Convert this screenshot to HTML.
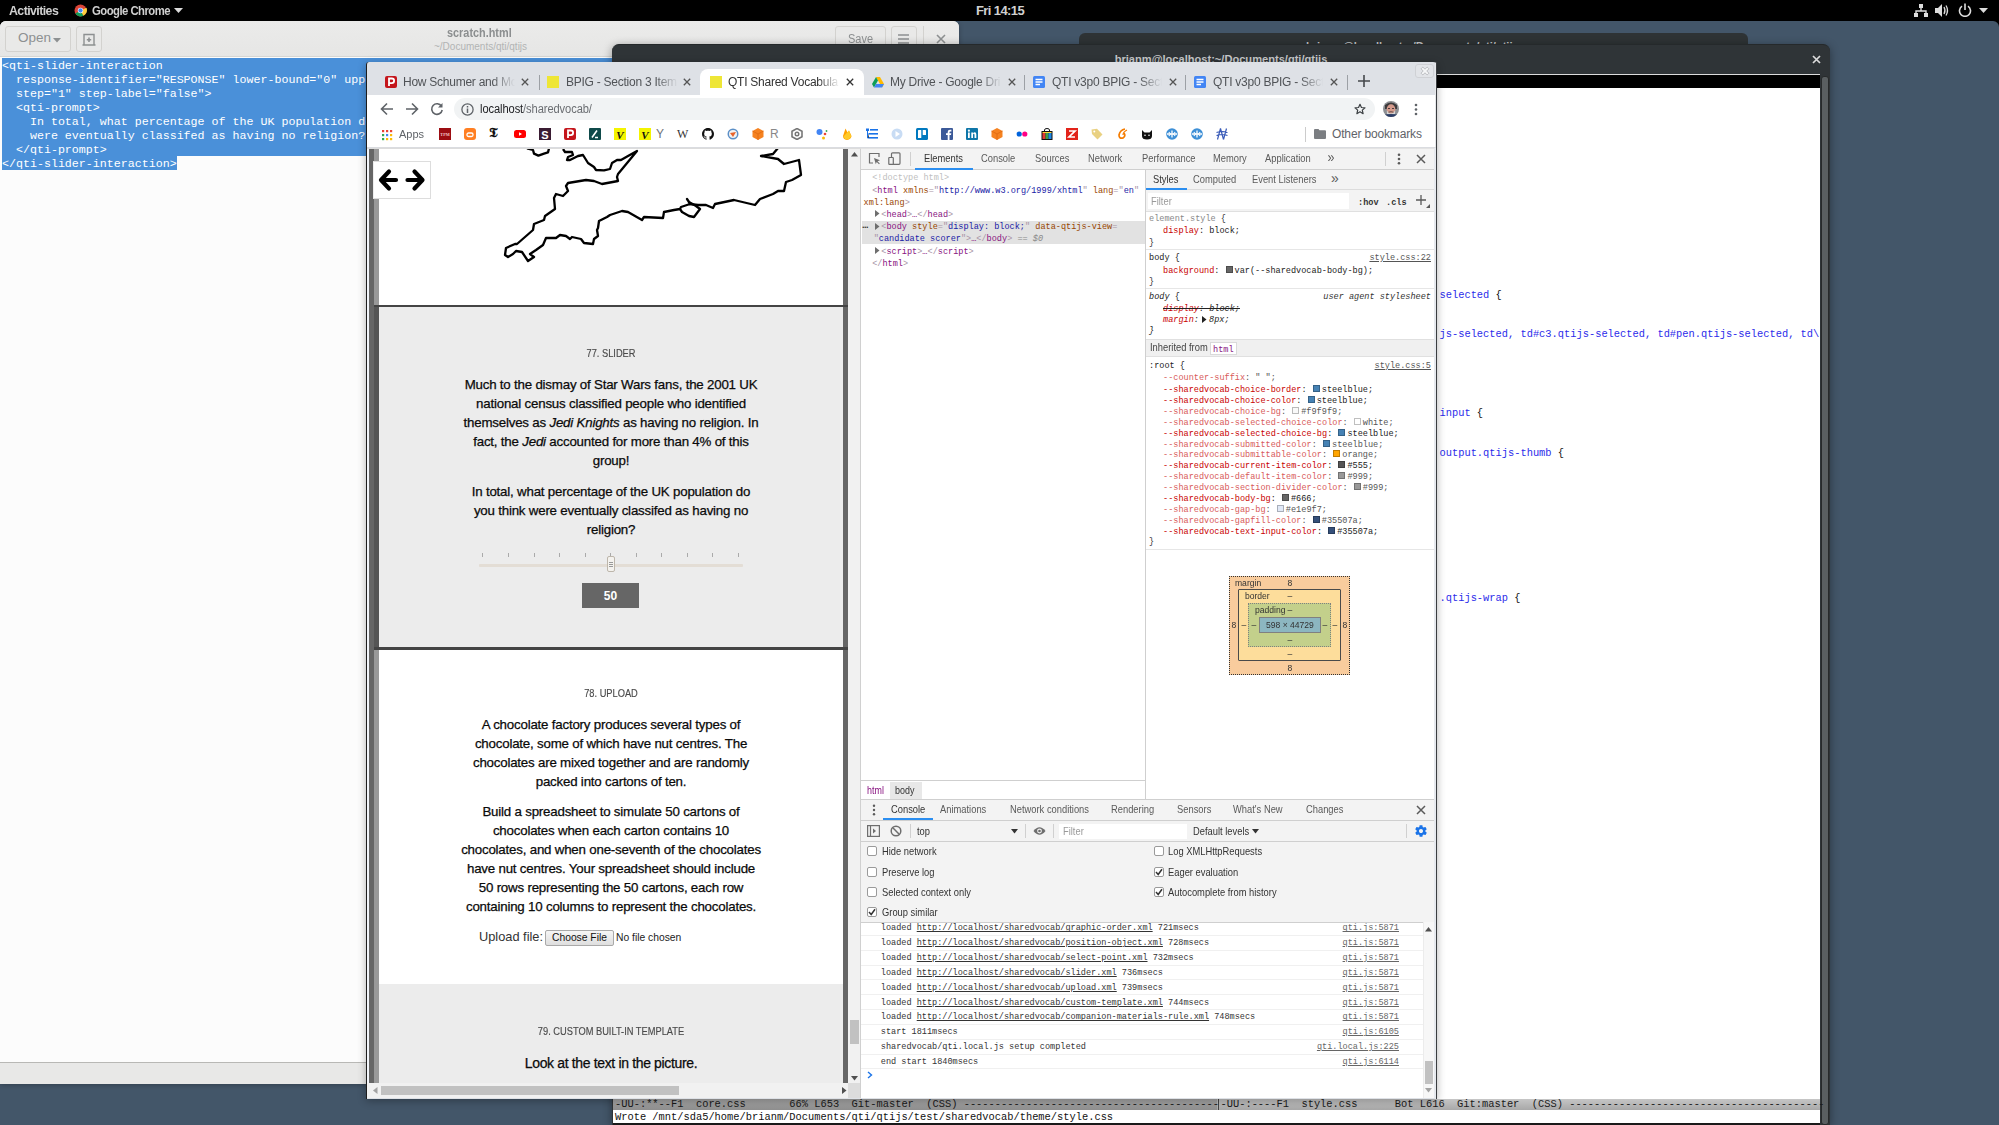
<!DOCTYPE html>
<html><head><meta charset="utf-8">
<style>
*{box-sizing:border-box;margin:0;padding:0}
html,body{width:1999px;height:1125px;overflow:hidden}
body{position:relative;background:#435669;font-family:"Liberation Sans",sans-serif;color:#000}
.a{position:absolute}
.m{font-family:"Liberation Mono",monospace}
.nw{white-space:nowrap}
#topbar{left:0;top:0;width:1999px;height:21px;background:#000;color:#d0d0d0;font-size:13px;font-weight:bold;letter-spacing:-0.6px}
#term{left:1079px;top:33px;width:669px;height:60px;background:#2e3335;border-radius:6px 6px 0 0}
#emacs{left:612px;top:45px;width:1218px;height:1080px;background:#2f3437;border-radius:6px 6px 0 0;overflow:hidden}
#gedit{left:0;top:21px;width:959px;height:1063px;background:#e8e8e7;border-radius:6px 6px 0 0;overflow:hidden;box-shadow:0 1px 5px rgba(0,0,0,0.25)}
#chrome{left:366px;top:62px;width:1071px;height:1037px;background:#dee1e6;border-left:1px solid #1d1d1d;overflow:hidden;border-radius:3px 4px 0 0;box-shadow:0 2px 9px rgba(0,0,0,0.3)}
.tab{position:absolute;top:0;height:32px;font-size:12px;color:#505357;letter-spacing:-0.25px}
.tab .fav{position:absolute;left:0;top:14px;width:12px;height:12px}
.tab .tt{position:absolute;top:13px;white-space:nowrap;overflow:hidden;-webkit-mask-image:linear-gradient(90deg,#000 80%,transparent 100%)}
.tab .x{position:absolute;top:9px;font-size:15px;color:#555}
.sep{position:absolute;top:13px;width:1px;height:15px;background:#9ca0a5}
.bm{position:absolute;top:6px;width:12px;height:12px}
</style></head><body>
<div id="topbar" class="a">
  <span class="a nw" style="left:9px;top:3px;transform:scaleX(0.95);transform-origin:0 0">Activities</span>
  <svg class="a" style="left:74px;top:4px" width="13" height="13" viewBox="0 0 24 24"><circle cx="12" cy="12" r="11" fill="#db4437"/><path d="M12 12 L2.5 17.5 A11 11 0 0 0 17.5 21.5 Z" fill="#0f9d58"/><path d="M12 12 L17.5 21.5 A11 11 0 0 0 23 7 Z" fill="#ffcd40"/><circle cx="12" cy="12" r="5" fill="#fff"/><circle cx="12" cy="12" r="4" fill="#4285f4"/></svg>
  <span class="a nw" style="left:92px;top:3px;transform:scaleX(0.87);transform-origin:0 0">Google Chrome</span>
  <svg class="a" style="left:174px;top:8px" width="9" height="5"><path d="M0 0H9L4.5 5Z" fill="#dcdcdc"/></svg>
  <span class="a nw" style="left:976px;top:3px">Fri 14:15</span>
  <svg class="a" style="left:1914px;top:4px" width="14" height="13" viewBox="0 0 14 13"><rect x="5" y="0" width="4" height="4" fill="#ddd"/><rect x="0" y="9" width="4" height="4" fill="#ddd"/><rect x="10" y="9" width="4" height="4" fill="#ddd"/><path d="M7 4V7M2 9V7H12V9" stroke="#ddd" stroke-width="1.4" fill="none"/></svg>
  <svg class="a" style="left:1935px;top:4px" width="15" height="13" viewBox="0 0 15 13"><path d="M0 4H3L7 0V13L3 9H0Z" fill="#ddd"/><path d="M9 3Q11 6.5 9 10M11 1.5Q14 6.5 11 11.5" stroke="#ddd" stroke-width="1.3" fill="none"/></svg>
  <svg class="a" style="left:1958px;top:3px" width="14" height="14" viewBox="0 0 14 14"><path d="M4 3.2A5.5 5.5 0 1 0 10 3.2" stroke="#ddd" stroke-width="1.6" fill="none"/><path d="M7 0.5V7" stroke="#ddd" stroke-width="1.6"/></svg>
  <svg class="a" style="left:1979px;top:8px" width="9" height="5"><path d="M0 0H9L4.5 5Z" fill="#ddd"/></svg>
</div>
<svg class="a panelcorner" style="left:1993px;top:21px" width="6" height="6"><path d="M0 0H6V6A6 6 0 0 0 0 0Z" fill="#000"/></svg>
<svg class="a" style="left:0;top:21px" width="6" height="6"><path d="M0 0H6A6 6 0 0 0 0 6Z" fill="#000"/></svg>
<div id="term" class="a">
  <span class="a nw" style="left:227px;top:7px;font-size:11.1px;color:#c5c7c8;font-weight:bold">brianm@localhost:~/Documents/qti/qtijs</span>
</div>
<div id="gedit" class="a">
  <div class="a" style="left:0;top:0;width:959px;height:36px;background:linear-gradient(#ebebea,#e6e6e5);border-bottom:1px solid #d6d6d3"></div>
  <div class="a" style="left:5px;top:5px;width:66px;height:26px;border:1px solid #d3d2cf;border-radius:3px;background:#e9e9e8"></div>
  <span class="a nw" style="left:18px;top:9px;font-size:13.5px;color:#8d9091">Open</span>
  <svg class="a" style="left:53px;top:17px" width="8" height="5"><path d="M0 0H8L4 4.5Z" fill="#8d9091"/></svg>
  <div class="a" style="left:76px;top:5px;width:26px;height:26px;border:1px solid #d3d2cf;border-radius:3px;background:#e9e9e8"></div>
  <svg class="a" style="left:82px;top:12px" width="14" height="13" viewBox="0 0 14 13"><path d="M2 12V1.5H12V12" stroke="#8d9091" stroke-width="1.4" fill="none"/><path d="M0.5 12H13.5" stroke="#8d9091" stroke-width="1.4"/><path d="M7 4.5V9M4.8 6.8H9.2" stroke="#8d9091" stroke-width="1.6"/></svg>
  <span class="a nw" style="left:447px;top:5px;font-size:12.5px;color:#8b8e8f;font-weight:bold;transform:scaleX(0.87);transform-origin:0 0">scratch.html</span>
  <span class="a nw" style="left:434px;top:20px;font-size:10px;color:#b2b4b4">~/Documents/qti/qtijs</span>
  <div class="a" style="left:835px;top:5px;width:51px;height:26px;border:1px solid #d3d2cf;border-radius:3px;background:#e9e9e8"></div>
  <span class="a nw" style="left:848px;top:11px;font-size:12.5px;color:#8d9091;transform:scaleX(0.88);transform-origin:0 0">Save</span>
  <div class="a" style="left:891px;top:5px;width:26px;height:26px;border:1px solid #d3d2cf;border-radius:3px;background:#e9e9e8"></div>
  <svg class="a" style="left:898px;top:13px" width="11" height="10"><path d="M0 1H11M0 5H11M0 9H11" stroke="#8d9091" stroke-width="1.5"/></svg>
  <div class="a" style="left:923px;top:5px;width:1px;height:26px;background:#d3d2cf"></div>
  <svg class="a" style="left:936px;top:13px" width="10" height="10"><path d="M1 1L9 9M9 1L1 9" stroke="#8d9091" stroke-width="1.6"/></svg>
  <div class="a" style="left:0;top:36px;width:959px;height:1005px;background:#fcfcfc"></div>
  <div class="a" style="left:0;top:1041px;width:959px;height:1px;background:#b8b8b5"></div>
  <div class="a m" style="left:2px;top:37px;width:957px;font-size:11.65px;line-height:14px;color:#fff;white-space:pre"><div style="height:14px;background:#4a90d9;padding-left:0px;padding-top:0.5px">&lt;qti-slider-interaction</div><div style="height:14px;background:#4a90d9;padding-left:0px;padding-top:0.5px">  response-identifier="RESPONSE" lower-bound="0" upper-bound="100"</div><div style="height:14px;background:#4a90d9;padding-left:0px;padding-top:0.5px">  step="1" step-label="false"&gt;</div><div style="height:14px;background:#4a90d9;padding-left:0px;padding-top:0.5px">  &lt;qti-prompt&gt;</div><div style="height:14px;background:#4a90d9;padding-left:0px;padding-top:0.5px">    In total, what percentage of the UK population do you think</div><div style="height:14px;background:#4a90d9;padding-left:0px;padding-top:0.5px">    were eventually classifed as having no religion?</div><div style="height:14px;background:#4a90d9;padding-left:0px;padding-top:0.5px">  &lt;/qti-prompt&gt;</div><div style="height:14px;padding-left:0px"><span style="background:#4a90d9;padding-left:0px;padding-top:0.5px;display:inline-block;height:14px">&lt;/qti-slider-interaction&gt;</span></div></div>
</div>
<div class="a" style="left:612px;top:44px;width:1218px;height:1081px;background:#2f3437;border-radius:7px 7px 0 0;border-top:1px solid #25292b;box-shadow:0 2px 10px rgba(0,0,0,0.4)"></div>
<div class="a nw" style="top:54.10px;font-size:11.1px;line-height:11.1px;color:#c5c7c8;font-family:'Liberation Sans',sans-serif;font-weight:bold;left:821px;width:800px;text-align:center;">brianm@localhost:~/Documents/qti/qtijs</div>
<svg class="a" style="left:1812px;top:55px" width="9" height="9"><path d="M1 1L8 8M8 1L1 8" stroke="#dcdcdc" stroke-width="1.7"/></svg>
<div class="a" style="left:613px;top:74px;width:1207px;height:1px;background:#dcdcdc;"></div>
<div class="a" style="left:613px;top:75px;width:1207px;height:13px;background:#000;"></div>
<div class="a" style="left:613px;top:88px;width:1207px;height:1011px;background:#fff;"></div>
<div class="a" style="left:1820px;top:74px;width:10px;height:1051px;background:#2f3437;"></div>
<div class="a" style="left:1821px;top:76px;width:8px;height:1049px;background:#5a5f61;border-radius:3px;border:1px solid #272a2b"></div>
<div class="a nw" style="top:289.65px;font-size:10.38px;line-height:10.38px;color:#111;font-family:'Liberation Mono',monospace;left:1439.5px;"><span style="color:#2b2bea">selected</span> {</div>
<div class="a nw" style="top:329.25px;font-size:10.38px;line-height:10.38px;color:#111;font-family:'Liberation Mono',monospace;left:1439.5px;"><span style="color:#2b2bea">js-selected, td#c3.qtijs-selected, td#pen.qtijs-selected, td\</span></div>
<div class="a nw" style="top:408.45px;font-size:10.38px;line-height:10.38px;color:#111;font-family:'Liberation Mono',monospace;left:1439.5px;"><span style="color:#2b2bea">input</span> {</div>
<div class="a nw" style="top:448.05px;font-size:10.38px;line-height:10.38px;color:#111;font-family:'Liberation Mono',monospace;left:1439.5px;"><span style="color:#2b2bea">output.qtijs-thumb</span> {</div>
<div class="a nw" style="top:593.25px;font-size:10.38px;line-height:10.38px;color:#111;font-family:'Liberation Mono',monospace;left:1439.5px;"><span style="color:#2b2bea">.qtijs-wrap</span> {</div>
<div class="a" style="left:613px;top:1099px;width:604px;height:11px;background:linear-gradient(#a9a9a9,#8f8f8f);"></div>
<div class="a" style="left:1217px;top:1099px;width:603px;height:11px;background:linear-gradient(#c6c6c6,#a8a8a8);"></div>
<div class="a" style="left:1218px;top:1099px;width:1px;height:11px;background:#444;"></div>
<div class="a nw" style="top:1098.55px;font-size:10.38px;line-height:10.38px;color:#1a1a1a;font-family:'Liberation Mono',monospace;left:615px;white-space:pre;letter-spacing:-0.0px">-UU-:**--F1  core.css       66% L653  Git-master  (CSS) -----------------------------------------</div>
<div class="a nw" style="top:1098.55px;font-size:10.38px;line-height:10.38px;color:#1a1a1a;font-family:'Liberation Mono',monospace;left:1220.5px;white-space:pre">-UU-:----F1  style.css      Bot L616  Git:master  (CSS) -----------------------------------------</div>
<div class="a" style="left:613px;top:1110px;width:1207px;height:13px;background:#fff;"></div>
<div class="a nw" style="top:1112.05px;font-size:10.38px;line-height:10.38px;color:#111;font-family:'Liberation Mono',monospace;left:615px;">Wrote /mnt/sda5/home/brianm/Documents/qti/qtijs/test/sharedvocab/theme/style.css</div>
<div class="a" style="left:613px;top:1123px;width:1207px;height:2px;background:#1a1a1a;"></div>
<div id="chrome" class="a">
 <!-- tabs: chrome-local coords: x = abs-367, y = abs-62 -->
 <div class="a" style="left:333px;top:7px;width:164px;height:26px;background:#fff;border-radius:8px 8px 0 0"></div>
 <div class="tab" style="left:18px"><svg class="fav" viewBox="0 0 12 12"><rect width="12" height="12" rx="2" fill="#c4161c"/><path d="M4 10V2.5H6.8A2.3 2.3 0 0 1 6.8 7.1H4" stroke="#fff" stroke-width="1.8" fill="none"/></svg><span class="tt" style="left:18px;width:112px">How Schumer and Mc</span><svg class="a" style="left:136px;top:16px" width="8" height="8"><path d="M0.8 0.8L7.2 7.2M7.2 0.8L0.8 7.2" stroke="#555" stroke-width="1.3"/></svg></div>
 <div class="sep" style="left:172px"></div>
 <div class="tab" style="left:180px"><div class="fav" style="background:#eee636"></div><span class="tt" style="left:19px;width:112px">BPIG - Section 3 Item</span><svg class="a" style="left:136px;top:16px" width="8" height="8"><path d="M0.8 0.8L7.2 7.2M7.2 0.8L0.8 7.2" stroke="#555" stroke-width="1.3"/></svg></div>
 <div class="tab" style="left:343px"><div class="fav" style="background:#eee636"></div><span class="tt" style="left:18px;width:112px;color:#333">QTI Shared Vocabula</span><svg class="a" style="left:136px;top:16px" width="8" height="8"><path d="M0.8 0.8L7.2 7.2M7.2 0.8L0.8 7.2" stroke="#333" stroke-width="1.3"/></svg></div>
 <div class="tab" style="left:505px"><svg class="fav" viewBox="0 0 12 12"><path d="M4 1H8L12 8L10 11.5Z" fill="#ffba00"/><path d="M4 1L0 8L2 11.5L6 4.5Z" fill="#0f9d58"/><path d="M2 11.5H10L12 8H4Z" fill="#4285f4"/></svg><span class="tt" style="left:18px;width:112px">My Drive - Google Dri</span><svg class="a" style="left:136px;top:16px" width="8" height="8"><path d="M0.8 0.8L7.2 7.2M7.2 0.8L0.8 7.2" stroke="#555" stroke-width="1.3"/></svg></div>
 <div class="sep" style="left:657px"></div>
 <div class="tab" style="left:666px"><svg class="fav" viewBox="0 0 12 12"><rect width="12" height="12" rx="1.5" fill="#4285f4"/><path d="M2.5 3.5H9.5M2.5 6H9.5M2.5 8.5H7" stroke="#fff" stroke-width="1.3"/></svg><span class="tt" style="left:19px;width:110px">QTI v3p0 BPIG - Sect</span><svg class="a" style="left:136px;top:16px" width="8" height="8"><path d="M0.8 0.8L7.2 7.2M7.2 0.8L0.8 7.2" stroke="#555" stroke-width="1.3"/></svg></div>
 <div class="sep" style="left:818px"></div>
 <div class="tab" style="left:827px"><svg class="fav" viewBox="0 0 12 12"><rect width="12" height="12" rx="1.5" fill="#4285f4"/><path d="M2.5 3.5H9.5M2.5 6H9.5M2.5 8.5H7" stroke="#fff" stroke-width="1.3"/></svg><span class="tt" style="left:19px;width:110px">QTI v3p0 BPIG - Sect</span><svg class="a" style="left:136px;top:16px" width="8" height="8"><path d="M0.8 0.8L7.2 7.2M7.2 0.8L0.8 7.2" stroke="#555" stroke-width="1.3"/></svg></div>
 <div class="sep" style="left:980px"></div>
 <svg class="a" style="left:991px;top:13px" width="12" height="12"><path d="M6 0V12M0 6H12" stroke="#45484c" stroke-width="1.6"/></svg>
 <div class="a" style="left:1048px;top:2px;width:19px;height:14px;border:1px solid #cfd1d5;border-radius:3px;background:#e2e4e8"></div><svg class="a" style="left:1053px;top:4px" width="10" height="10"><path d="M5.00 6.77 L7.16 8.92 L8.92 7.16 L6.77 5.00 L8.92 2.84 L7.16 1.08 L5.00 3.23 L2.84 1.08 L1.08 2.84 L3.23 5.00 L1.08 7.16 L2.84 8.92Z" fill="#f6f7f8" stroke="#aeb1b5" stroke-width="0.8" stroke-linejoin="round"/></svg>
 <!-- toolbar -->
 <div class="a" style="left:0;top:33px;width:1070px;height:53px;background:#fff"></div>
 <svg class="a" style="left:13px;top:40px" width="14" height="14" viewBox="0 0 14 14"><path d="M13 7H2M7 1.5L1.5 7L7 12.5" stroke="#5f6368" stroke-width="1.6" fill="none"/></svg>
 <svg class="a" style="left:38px;top:40px" width="14" height="14" viewBox="0 0 14 14"><path d="M1 7H12M7 1.5L12.5 7L7 12.5" stroke="#5f6368" stroke-width="1.6" fill="none"/></svg>
 <svg class="a" style="left:63px;top:40px" width="14" height="14" viewBox="0 0 14 14"><path d="M11.5 4.2A5.3 5.3 0 1 0 12.2 8" stroke="#5f6368" stroke-width="1.6" fill="none"/><path d="M12.5 1V5.5H8" fill="#5f6368"/></svg>
 <div class="a" style="left:87px;top:36px;width:921px;height:22px;border-radius:11px;background:#f1f3f4"></div>
 <svg class="a" style="left:94px;top:41px" width="13" height="13" viewBox="0 0 13 13"><circle cx="6.5" cy="6.5" r="5.6" stroke="#5f6368" stroke-width="1.3" fill="none"/><path d="M6.5 5.5V10M6.5 3V4.4" stroke="#5f6368" stroke-width="1.5"/></svg>
 <span class="a nw" style="left:113px;top:40px;font-size:12.5px;color:#202124;letter-spacing:-0.1px;transform:scaleX(0.89);transform-origin:0 0">localhost<span style="color:#6b6e72">/sharedvocab/</span></span>
 <svg class="a" style="left:987px;top:41px" width="12" height="12" viewBox="0 0 24 24"><path d="M12 2.5L14.9 9L22 9.6L16.6 14.3L18.2 21.3L12 17.6L5.8 21.3L7.4 14.3L2 9.6L9.1 9Z" stroke="#3c4043" stroke-width="2.4" fill="none" stroke-linejoin="round"/></svg>
 <svg class="a" style="left:1016px;top:39px" width="16" height="16" viewBox="0 0 16 16"><defs><clipPath id="av"><circle cx="8" cy="8" r="8"/></clipPath></defs><g clip-path="url(#av)"><rect width="16" height="16" fill="#8d8f93"/><path d="M2 4Q8 -1 14 4V8H2Z" fill="#3b3a3c"/><ellipse cx="8" cy="8.2" rx="4.3" ry="5" fill="#d49a8c"/><path d="M3.8 9.5Q8 15.5 12.2 9.5L12 13Q8 15 4 13Z" fill="#d8d6d4"/><path d="M5.5 11.2Q8 10.2 10.5 11.2" stroke="#5a4844" stroke-width="0.9" fill="none"/><path d="M0 14Q8 12 16 14V16H0Z" fill="#2c3d66"/><rect x="5" y="7" width="2" height="0.9" fill="#3b3032"/><rect x="9" y="7" width="2" height="0.9" fill="#3b3032"/></g></svg>
 <svg class="a" style="left:1047px;top:41px" width="4" height="14"><circle cx="2" cy="2" r="1.3" fill="#5f6368"/><circle cx="2" cy="6.5" r="1.3" fill="#5f6368"/><circle cx="2" cy="11" r="1.3" fill="#5f6368"/></svg>
 <div class="a chrome-rborder" style="left:1068px;top:0;width:1px;height:1037px;background:#e6e8eb"></div><div class="a" style="left:1069px;top:0;width:1px;height:1037px;background:#3a3d40"></div>
 <!-- bookmarks -->
 <div class="a" style="left:0;top:60px;width:1070px;height:26px">
  <svg class="bm" style="left:14px;top:7px" viewBox="0 0 12 12"><rect x="1" y="1" width="2.2" height="2.2" fill="#ea4335"/><rect x="5" y="1" width="2.2" height="2.2" fill="#ea4335"/><rect x="9" y="1" width="2.2" height="2.2" fill="#ea4335"/><rect x="1" y="5" width="2.2" height="2.2" fill="#34a853"/><rect x="5" y="5" width="2.2" height="2.2" fill="#4285f4"/><rect x="9" y="5" width="2.2" height="2.2" fill="#fbbc05"/><rect x="1" y="9" width="2.2" height="2.2" fill="#34a853"/><rect x="5" y="9" width="2.2" height="2.2" fill="#fbbc05"/><rect x="9" y="9" width="2.2" height="2.2" fill="#fbbc05"/></svg>
  <span class="a nw" style="left:32px;top:5px;font-size:11.6px;color:#5f6368;transform:scaleX(0.95);transform-origin:0 0">Apps</span>
  <svg class="bm" style="left:72px" viewBox="0 0 12 12"><rect width="12" height="12" fill="#9c0d12"/><text x="6" y="7.6" font-size="4.2" font-weight="bold" text-anchor="middle" fill="#f3c9c9" font-family="Liberation Serif">TPM</text></svg>
  <svg class="bm" style="left:97px" viewBox="0 0 12 12"><rect width="12" height="12" rx="3" fill="#ff7f23"/><rect x="3" y="5" width="6" height="3.5" rx="1.5" stroke="#fff" stroke-width="1.3" fill="none"/></svg>
  <span class="a nw" style="left:122px;top:3px;font-size:14px;font-family:'Liberation Serif',serif;font-weight:bold;color:#111">𝕿</span>
  <svg class="bm" style="left:147px" viewBox="0 0 12 12"><rect y="2" width="12" height="8" rx="2.5" fill="#f00"/><path d="M5 4.2V7.8L8 6Z" fill="#fff"/></svg>
  <svg class="bm" style="left:172px" viewBox="0 0 12 12"><rect width="12" height="12" fill="#3a1c33"/><text x="6" y="10.5" font-size="11" font-weight="bold" text-anchor="middle" fill="#fff" font-family="Liberation Sans">S</text></svg>
  <svg class="bm" style="left:197px" viewBox="0 0 12 12"><rect width="12" height="12" rx="2" fill="#c4161c"/><path d="M4 10V2.5H6.8A2.3 2.3 0 0 1 6.8 7.1H4" stroke="#fff" stroke-width="1.8" fill="none"/></svg>
  <svg class="bm" style="left:222px" viewBox="0 0 12 12"><rect width="12" height="12" rx="1" fill="#0f4a4a"/><path d="M3 9.5L8 2.5M6 9.5H9" stroke="#fff" stroke-width="1.6"/></svg>
  <svg class="bm" style="left:247px" viewBox="0 0 12 12"><rect width="12" height="12" fill="#f4f400"/><text x="6" y="10.5" font-size="11" font-weight="bold" font-style="italic" text-anchor="middle" fill="#111" font-family="Liberation Serif">V</text></svg>
  <svg class="bm" style="left:272px" viewBox="0 0 12 12"><rect width="12" height="12" fill="#f4f400"/><text x="6" y="10.5" font-size="11" font-weight="bold" font-style="italic" text-anchor="middle" fill="#111" font-family="Liberation Serif">V</text></svg>
  <span class="a nw" style="left:289px;top:5px;font-size:12px;color:#6f7378">Y</span>
  <span class="a nw" style="left:310px;top:5px;font-size:12px;font-family:'Liberation Serif',serif;color:#333">W</span>
  <svg class="bm" style="left:335px" viewBox="0 0 16 16"><path d="M8 0C3.6 0 0 3.6 0 8c0 3.5 2.3 6.5 5.5 7.6.4.1.5-.2.5-.4v-1.4c-2.2.5-2.7-1-2.7-1-.4-.9-.9-1.2-.9-1.2-.7-.5.1-.5.1-.5.8.1 1.2.8 1.2.8.7 1.2 1.9.9 2.3.7.1-.5.3-.9.5-1.1-1.8-.2-3.6-.9-3.6-4 0-.9.3-1.6.8-2.1-.1-.2-.4-1 .1-2.1 0 0 .7-.2 2.2.8.6-.2 1.3-.3 2-.3s1.4.1 2 .3c1.5-1 2.2-.8 2.2-.8.4 1.1.2 1.9.1 2.1.5.6.8 1.3.8 2.1 0 3.1-1.9 3.7-3.6 3.9.3.3.6.8.6 1.5v2.2c0 .2.1.5.6.4C13.7 14.5 16 11.5 16 8c0-4.4-3.6-8-8-8z" fill="#111"/></svg>
  <svg class="bm" style="left:360px" viewBox="0 0 12 12"><circle cx="6" cy="6" r="5.5" fill="#5b8fc7"/><circle cx="6" cy="6" r="4" fill="#f2f2f2"/><path d="M3 5L9 4L6 9Z" fill="#e8632b"/></svg>
  <svg class="bm" style="left:385px" viewBox="0 0 12 12"><path d="M6 0L11.5 3V9L6 12L0.5 9V3Z" fill="#f58220"/><path d="M6 6L11.5 3M6 6V12M6 6L0.5 3" stroke="#e06810" stroke-width="0.8"/></svg>
  <span class="a nw" style="left:403px;top:5px;font-size:12px;color:#888">R</span>
  <svg class="bm" style="left:424px" viewBox="0 0 12 12"><path d="M6 0.5L11 3.2V8.8L6 11.5L1 8.8V3.2Z" stroke="#777" stroke-width="1.6" fill="none"/><circle cx="6" cy="6" r="1.8" stroke="#777" stroke-width="1.4" fill="none"/></svg>
  <svg class="bm" style="left:449px" viewBox="0 0 12 12"><circle cx="3.5" cy="4" r="3" fill="#4285f4"/><circle cx="9" cy="6" r="1.3" fill="#ea4335"/><circle cx="7.5" cy="10" r="1.5" fill="#fbbc05"/><circle cx="10.5" cy="3" r="0.9" fill="#34a853"/></svg>
  <svg class="bm" style="left:474px" viewBox="0 0 12 12"><path d="M2 8L4.5 0.5L6.5 4.5L8 2.5L10.5 8Q10 11.5 6 12Q2 11.5 2 8Z" fill="#ffa000"/><path d="M2.5 8.5L8 2.5L10.3 8.5Q9 11 6 11.5Q3 11 2.5 8.5Z" fill="#ffca28"/></svg>
  <svg class="bm" style="left:499px" viewBox="0 0 12 12"><rect x="0" y="0.5" width="3" height="2.5" fill="#1a73e8"/><rect x="4" y="1" width="8" height="1.6" fill="#1a73e8"/><rect x="3" y="5" width="9" height="1.6" fill="#1a73e8"/><rect x="3" y="9" width="9" height="1.6" fill="#1a73e8"/><path d="M1.5 3V10H3M1.5 6H3" stroke="#1a73e8" stroke-width="1"/></svg>
  <svg class="bm" style="left:524px" viewBox="0 0 12 12"><circle cx="6" cy="6" r="5.5" fill="#c8dcf4"/><path d="M4.5 3V9L9 6Z" fill="#fff"/></svg>
  <svg class="bm" style="left:549px" viewBox="0 0 12 12"><rect width="12" height="12" rx="1.5" fill="#0079bf"/><rect x="2" y="2" width="3.3" height="8" rx="0.6" fill="#fff"/><rect x="6.7" y="2" width="3.3" height="5" rx="0.6" fill="#fff"/></svg>
  <svg class="bm" style="left:574px" viewBox="0 0 12 12"><rect width="12" height="12" rx="1" fill="#3b5998"/><path d="M8.5 12V7H10L10.3 5.2H8.5V4.2Q8.5 3.4 9.3 3.4H10.4V1.8Q9.8 1.7 9 1.7Q6.7 1.7 6.7 4V5.2H5V7H6.7V12Z" fill="#fff"/></svg>
  <svg class="bm" style="left:599px" viewBox="0 0 12 12"><rect width="12" height="12" rx="1" fill="#0e76a8"/><rect x="2" y="4.5" width="1.8" height="5.5" fill="#fff"/><circle cx="2.9" cy="2.7" r="1.1" fill="#fff"/><path d="M5.3 10V4.5H7V5.4Q7.6 4.3 8.8 4.3Q10.3 4.3 10.3 6.5V10H8.5V7Q8.5 5.8 7.8 5.8Q7 5.8 7 7V10Z" fill="#fff"/></svg>
  <svg class="bm" style="left:624px" viewBox="0 0 12 12"><path d="M6 0L11.5 3V9L6 12L0.5 9V3Z" fill="#f58220"/><path d="M6 6L11.5 3M6 6V12M6 6L0.5 3" stroke="#e06810" stroke-width="0.8"/></svg>
  <svg class="bm" style="left:649px" viewBox="0 0 12 12"><circle cx="3.2" cy="6" r="2.6" fill="#0063dc"/><circle cx="8.8" cy="6" r="2.6" fill="#ff0084"/></svg>
  <svg class="bm" style="left:674px" viewBox="0 0 12 12"><path d="M3.5 3.5V2Q3.5 0.5 6 0.5Q8.5 0.5 8.5 2V3.5" stroke="#111" stroke-width="1" fill="none"/><rect x="0.5" y="3" width="11" height="9" fill="#111"/><rect x="1.5" y="5" width="3" height="6" fill="#e53935"/><rect x="4.5" y="5" width="3" height="6" fill="#43a047"/><rect x="7.5" y="5" width="3" height="6" fill="#1e88e5"/><rect x="1.5" y="4" width="9" height="1" fill="#fdd835"/></svg>
  <svg class="bm" style="left:699px" viewBox="0 0 12 12"><rect width="12" height="12" fill="#e2231a"/><path d="M3 3H9L3 9H9" stroke="#fff" stroke-width="1.7" fill="none"/></svg>
  <svg class="bm" style="left:724px" viewBox="0 0 12 12"><path d="M0.5 1.5L6 0.8L11.5 6.5L6.5 11.5L1 6Z" fill="#e9d182"/><circle cx="3.3" cy="3.5" r="1" fill="#fff"/></svg>
  <svg class="bm" style="left:749px" viewBox="0 0 12 12"><path d="M9 1Q4 2 3 7Q3 11 7 10Q10 8 8 5" stroke="#f57c00" stroke-width="1.7" fill="none"/><path d="M11 2Q7 4 7 7" stroke="#f57c00" stroke-width="1.2" fill="none"/></svg>
  <svg class="bm" style="left:774px" viewBox="0 0 12 12"><path d="M1 2L3.5 4.5H8.5L11 2V8Q11 11.5 6 11.5Q1 11.5 1 8Z" fill="#111"/><circle cx="4" cy="7.3" r="0.8" fill="#fff"/><circle cx="8" cy="7.3" r="0.8" fill="#fff"/></svg>
  <svg class="bm" style="left:799px" viewBox="0 0 12 12"><circle cx="6" cy="6" r="5.8" fill="#3d8fd6"/><path d="M1 6H11M6 2.5V9.5" stroke="#fff" stroke-width="1.3"/><path d="M2.8 4L4.5 6L2.8 8M9.2 4L7.5 6L9.2 8" stroke="#fff" stroke-width="1.1" fill="none"/></svg>
  <svg class="bm" style="left:824px" viewBox="0 0 12 12"><circle cx="6" cy="6" r="5.8" fill="#3d8fd6"/><path d="M1 6H11M6 2.5V9.5" stroke="#fff" stroke-width="1.3"/><path d="M2.8 4L4.5 6L2.8 8M9.2 4L7.5 6L9.2 8" stroke="#fff" stroke-width="1.1" fill="none"/></svg>
  <svg class="bm" style="left:849px" viewBox="0 0 12 12"><path d="M1.5 11.5L4.5 0.5M4.5 0.5L7.5 11.5M7.5 11.5L10.5 0.5M0.5 4.5Q6 2.5 11.5 4.5M0.5 7.5Q6 5.5 11.5 7.5" stroke="#3a5bb8" stroke-width="1.2" fill="none"/></svg>
  <div class="a" style="left:938px;top:5px;width:1px;height:15px;background:#ccc"></div>
  <svg class="a" style="left:947px;top:7px" width="12" height="10" viewBox="0 0 12 10"><path d="M0 1Q0 0 1 0H4.5L5.5 1.2H11Q12 1.2 12 2.2V9Q12 10 11 10H1Q0 10 0 9Z" fill="#7b7e82"/></svg>
  <span class="a nw" style="left:965px;top:5px;font-size:12px;color:#5f6368;letter-spacing:-0.15px">Other bookmarks</span>
 </div>
 <div class="a" style="left:0;top:85px;width:1070px;height:1px;background:#dadce0"></div>

</div>
<div class="a" style="left:367px;top:148px;width:481px;height:950px;overflow:hidden;background:#666">
<div class="a" style="left:0px;top:0px;width:2px;height:935px;background:#f2f5fa;"></div>
<div class="a" style="left:7px;top:-1px;width:5px;height:158px;background:#999;"></div>
<div class="a" style="left:12px;top:-1px;width:464px;height:158px;background:#fff;"></div>
<div class="a" style="left:7px;top:157px;width:474px;height:2px;background:#444;"></div>
<div class="a" style="left:7px;top:159px;width:5px;height:340px;background:#555;"></div>
<div class="a" style="left:12px;top:159px;width:464px;height:340px;background:#ececec;"></div>
<div class="a" style="left:7px;top:499px;width:474px;height:3px;background:#444;"></div>
<div class="a" style="left:7px;top:502px;width:5px;height:334px;background:#999;"></div>
<div class="a" style="left:12px;top:502px;width:464px;height:334px;background:#fff;"></div>
<div class="a" style="left:7px;top:836px;width:5px;height:120px;background:#999;"></div>
<div class="a" style="left:12px;top:836px;width:464px;height:120px;background:#ececec;"></div>
<svg class="a" style="left:0;top:0" width="481" height="160"><g fill="none" stroke="#000" stroke-width="2.3" stroke-linejoin="round"><path d="M196.0 1.0 L198.0 4.0 L205.0 4.0 L206.0 7.0 L201.0 9.0 L200.0 12.0 L203.0 12.0 L211.0 8.0 L216.0 7.0 L221.0 15.0 L227.0 19.0 L229.0 22.0 L237.0 22.4 L243.0 21.0 L245.0 15.0 L250.0 12.0 L254.0 12.0 L261.0 8.0 L270.0 3.0 L251.0 26.0 L250.0 29.0 L251.0 33.0 L235.0 36.0 L227.0 33.0 L219.0 32.0 L201.0 35.0 L199.0 38.0 L201.0 43.0 L196.0 48.0 L189.0 46.0 L187.0 50.0 L188.0 61.0 L178.0 68.0 L177.0 72.0 L167.0 76.0 L166.0 82.0 L150.0 96.0 L148.0 96.0 L139.0 100.0 L138.0 107.0 L141.0 109.0 L146.0 106.0 L149.0 103.0 L155.0 104.0 L161.0 113.0 L167.0 109.0 L163.0 106.0 L169.0 102.0 L176.0 97.0 L179.0 90.0 L189.0 90.0 L193.0 87.0 L199.0 88.0 L203.0 91.0 L205.0 89.0 L214.0 91.0 L217.0 95.0 L226.0 96.0 L227.0 91.0 L231.0 88.0 L230.0 82.0 L231.0 80.0 L232.0 73.0 L234.0 72.0 L240.0 69.0 L243.0 67.0 L255.0 63.0 L261.0 64.0 L275.0 72.0 L277.0 69.0 L296.0 70.0 L297.0 64.0 L307.0 62.0 L313.0 61.0 L315.0 64.0 L322.0 68.0 L327.0 69.0 L333.0 61.0 L329.0 58.0 L322.0 54.0 L320.0 51.0 L323.0 56.0 L314.0 59.0 L313.0 61.0"/><path d="M322.0 56.0 L331.0 57.0 L339.0 57.0 L346.0 60.0 L348.0 56.0 L367.0 52.0 L388.0 57.0 L393.0 51.0 L406.0 46.0 L411.0 43.0 L417.0 43.0 L419.0 34.0 L425.0 32.0 L434.0 27.0 L432.0 12.0 L417.0 16.0 L411.0 11.0 L394.0 8.0 L406.0 6.0 L411.0 0.0"/><path d="M160.0 0.4 L166.0 2.0 L167.0 5.6 L171.4 7.6 L177.0 5.6 L181.0 4.4 L182.0 0.4"/></g></svg>
<div class="a" style="left:6px;top:13px;width:58px;height:38px;background:#fff;border:1px solid #ddd;border-left-color:#eee"></div>
<svg class="a" style="left:10px;top:20px" width="50" height="24" viewBox="0 0 50 24"><path d="M12 3.5L4 12L12 20.5M4.5 12H19" stroke="#000" stroke-width="4.2" stroke-linecap="round" stroke-linejoin="round" fill="none"/><path d="M37.5 3.5L45.5 12L37.5 20.5M45 12H30.5" stroke="#000" stroke-width="4.2" stroke-linecap="round" stroke-linejoin="round" fill="none"/></svg>
<div class="a nw" style="top:200.16px;font-size:10.8px;line-height:10.8px;color:#4a4a4a;font-family:'Liberation Sans',sans-serif;left:-156px;width:800px;text-align:center;transform:scaleX(0.86);transform-origin:50% 0;-webkit-text-stroke:0.15px #4a4a4a">77. SLIDER</div>
<div class="a nw" style="top:230.04px;font-size:13.3px;line-height:13.3px;color:#0a0a0a;font-family:'Liberation Sans',sans-serif;letter-spacing:-0.2px;left:-156px;width:800px;text-align:center;-webkit-text-stroke:0.25px #0a0a0a">Much to the dismay of Star Wars fans, the 2001 UK</div>
<div class="a nw" style="top:249.04px;font-size:13.3px;line-height:13.3px;color:#0a0a0a;font-family:'Liberation Sans',sans-serif;letter-spacing:-0.2px;left:-156px;width:800px;text-align:center;-webkit-text-stroke:0.25px #0a0a0a">national census classified people who identified</div>
<div class="a nw" style="top:268.04px;font-size:13.3px;line-height:13.3px;color:#0a0a0a;font-family:'Liberation Sans',sans-serif;letter-spacing:-0.2px;left:-156px;width:800px;text-align:center;-webkit-text-stroke:0.25px #0a0a0a">themselves as <i>Jedi Knights</i> as having no religion. In</div>
<div class="a nw" style="top:287.04px;font-size:13.3px;line-height:13.3px;color:#0a0a0a;font-family:'Liberation Sans',sans-serif;letter-spacing:-0.2px;left:-156px;width:800px;text-align:center;-webkit-text-stroke:0.25px #0a0a0a">fact, the <i>Jedi</i> accounted for more than 4% of this</div>
<div class="a nw" style="top:306.04px;font-size:13.3px;line-height:13.3px;color:#0a0a0a;font-family:'Liberation Sans',sans-serif;letter-spacing:-0.2px;left:-156px;width:800px;text-align:center;-webkit-text-stroke:0.25px #0a0a0a">group!</div>
<div class="a nw" style="top:337.04px;font-size:13.3px;line-height:13.3px;color:#0a0a0a;font-family:'Liberation Sans',sans-serif;letter-spacing:-0.2px;left:-156px;width:800px;text-align:center;-webkit-text-stroke:0.25px #0a0a0a">In total, what percentage of the UK population do</div>
<div class="a nw" style="top:356.04px;font-size:13.3px;line-height:13.3px;color:#0a0a0a;font-family:'Liberation Sans',sans-serif;letter-spacing:-0.2px;left:-156px;width:800px;text-align:center;-webkit-text-stroke:0.25px #0a0a0a">you think were eventually classifed as having no</div>
<div class="a nw" style="top:375.04px;font-size:13.3px;line-height:13.3px;color:#0a0a0a;font-family:'Liberation Sans',sans-serif;letter-spacing:-0.2px;left:-156px;width:800px;text-align:center;-webkit-text-stroke:0.25px #0a0a0a">religion?</div>
<div class="a" style="left:115px;top:405px;width:1px;height:4px;background:#aaa;"></div>
<div class="a" style="left:141px;top:405px;width:1px;height:4px;background:#aaa;"></div>
<div class="a" style="left:167px;top:405px;width:1px;height:4px;background:#aaa;"></div>
<div class="a" style="left:192px;top:405px;width:1px;height:4px;background:#aaa;"></div>
<div class="a" style="left:218px;top:405px;width:1px;height:4px;background:#aaa;"></div>
<div class="a" style="left:243px;top:405px;width:1px;height:4px;background:#aaa;"></div>
<div class="a" style="left:269px;top:405px;width:1px;height:4px;background:#aaa;"></div>
<div class="a" style="left:294px;top:405px;width:1px;height:4px;background:#aaa;"></div>
<div class="a" style="left:320px;top:405px;width:1px;height:4px;background:#aaa;"></div>
<div class="a" style="left:345px;top:405px;width:1px;height:4px;background:#aaa;"></div>
<div class="a" style="left:371px;top:405px;width:1px;height:4px;background:#aaa;"></div>
<div class="a" style="left:112px;top:416px;width:264px;height:3px;background:#e3ddd5;border-radius:1px"></div>
<div class="a" style="left:240px;top:408px;width:8px;height:16px;background:#f4f2ee;border:1px solid #bdb6ab;border-radius:2px"></div>
<div class="a" style="left:242px;top:414px;width:4px;height:1px;background:#999;"></div>
<div class="a" style="left:242px;top:416px;width:4px;height:1px;background:#999;"></div>
<div class="a" style="left:242px;top:418px;width:4px;height:1px;background:#999;"></div>
<div class="a" style="left:215px;top:435px;width:57px;height:25px;background:#666;"></div>
<div class="a nw" style="top:442.34px;font-size:12px;line-height:12px;color:#fff;font-family:'Liberation Sans',sans-serif;font-weight:bold;left:-156.5px;width:800px;text-align:center;">50</div>
<div class="a nw" style="top:539.86px;font-size:10.8px;line-height:10.8px;color:#4a4a4a;font-family:'Liberation Sans',sans-serif;left:-156px;width:800px;text-align:center;transform:scaleX(0.86);transform-origin:50% 0;-webkit-text-stroke:0.15px #4a4a4a">78. UPLOAD</div>
<div class="a nw" style="top:569.54px;font-size:13.3px;line-height:13.3px;color:#0a0a0a;font-family:'Liberation Sans',sans-serif;letter-spacing:-0.2px;left:-156px;width:800px;text-align:center;-webkit-text-stroke:0.25px #0a0a0a">A chocolate factory produces several types of</div>
<div class="a nw" style="top:588.54px;font-size:13.3px;line-height:13.3px;color:#0a0a0a;font-family:'Liberation Sans',sans-serif;letter-spacing:-0.2px;left:-156px;width:800px;text-align:center;-webkit-text-stroke:0.25px #0a0a0a">chocolate, some of which have nut centres. The</div>
<div class="a nw" style="top:607.54px;font-size:13.3px;line-height:13.3px;color:#0a0a0a;font-family:'Liberation Sans',sans-serif;letter-spacing:-0.2px;left:-156px;width:800px;text-align:center;-webkit-text-stroke:0.25px #0a0a0a">chocolates are mixed together and are randomly</div>
<div class="a nw" style="top:626.54px;font-size:13.3px;line-height:13.3px;color:#0a0a0a;font-family:'Liberation Sans',sans-serif;letter-spacing:-0.2px;left:-156px;width:800px;text-align:center;-webkit-text-stroke:0.25px #0a0a0a">packed into cartons of ten.</div>
<div class="a nw" style="top:657.04px;font-size:13.3px;line-height:13.3px;color:#0a0a0a;font-family:'Liberation Sans',sans-serif;letter-spacing:-0.2px;left:-156px;width:800px;text-align:center;-webkit-text-stroke:0.25px #0a0a0a">Build a spreadsheet to simulate 50 cartons of</div>
<div class="a nw" style="top:676.04px;font-size:13.3px;line-height:13.3px;color:#0a0a0a;font-family:'Liberation Sans',sans-serif;letter-spacing:-0.2px;left:-156px;width:800px;text-align:center;-webkit-text-stroke:0.25px #0a0a0a">chocolates when each carton contains 10</div>
<div class="a nw" style="top:695.04px;font-size:13.3px;line-height:13.3px;color:#0a0a0a;font-family:'Liberation Sans',sans-serif;letter-spacing:-0.2px;left:-156px;width:800px;text-align:center;-webkit-text-stroke:0.25px #0a0a0a">chocolates, and when one-seventh of the chocolates</div>
<div class="a nw" style="top:714.04px;font-size:13.3px;line-height:13.3px;color:#0a0a0a;font-family:'Liberation Sans',sans-serif;letter-spacing:-0.2px;left:-156px;width:800px;text-align:center;-webkit-text-stroke:0.25px #0a0a0a">have nut centres. Your spreadsheet should include</div>
<div class="a nw" style="top:733.04px;font-size:13.3px;line-height:13.3px;color:#0a0a0a;font-family:'Liberation Sans',sans-serif;letter-spacing:-0.2px;left:-156px;width:800px;text-align:center;-webkit-text-stroke:0.25px #0a0a0a">50 rows representing the 50 cartons, each row</div>
<div class="a nw" style="top:752.04px;font-size:13.3px;line-height:13.3px;color:#0a0a0a;font-family:'Liberation Sans',sans-serif;letter-spacing:-0.2px;left:-156px;width:800px;text-align:center;-webkit-text-stroke:0.25px #0a0a0a">containing 10 columns to represent the chocolates.</div>
<div class="a nw" style="top:782.66px;font-size:12.8px;line-height:12.8px;color:#333;font-family:'Liberation Sans',sans-serif;left:112px;">Upload file:</div>
<div class="a" style="left:178px;top:782px;width:69px;height:16px;background:linear-gradient(#f6f6f6,#dedede);border:1px solid #a9a9a9;border-radius:2px"></div>
<div class="a nw" style="top:785.08px;font-size:10.3px;line-height:10.3px;color:#111;font-family:'Liberation Sans',sans-serif;left:185px;">Choose File</div>
<div class="a nw" style="top:785.08px;font-size:10.3px;line-height:10.3px;color:#222;font-family:'Liberation Sans',sans-serif;left:249px;">No file chosen</div>
<div class="a nw" style="top:878.36px;font-size:10.8px;line-height:10.8px;color:#4a4a4a;font-family:'Liberation Sans',sans-serif;left:-156px;width:800px;text-align:center;transform:scaleX(0.86);transform-origin:50% 0;-webkit-text-stroke:0.15px #4a4a4a">79. CUSTOM BUILT-IN TEMPLATE</div>
<div class="a nw" style="top:907.65px;font-size:14px;line-height:14px;color:#0a0a0a;font-family:'Liberation Sans',sans-serif;letter-spacing:-0.35px;left:-156px;width:800px;text-align:center;-webkit-text-stroke:0.25px #0a0a0a">Look at the text in the picture.</div>
</div>
<div class="a" style="left:848px;top:148px;width:12px;height:935px;background:#f1f1f1;"></div>
<div class="a" style="left:860px;top:148px;width:1px;height:950px;background:#d0d0d0;"></div>
<svg class="a" style="left:851px;top:152px" width="7" height="5"><path d="M0 4.5H7L3.5 0Z" fill="#505050"/></svg>
<svg class="a" style="left:851px;top:1076px" width="7" height="5"><path d="M0 0H7L3.5 4.5Z" fill="#505050"/></svg>
<div class="a" style="left:850px;top:1020px;width:9px;height:24px;background:#c1c1c1;"></div>
<div class="a" style="left:367px;top:1083px;width:481px;height:15px;background:#f1f1f1;"></div>
<div class="a" style="left:848px;top:1083px;width:12px;height:15px;background:#dcdcdc;"></div>
<div class="a" style="left:381px;top:1086px;width:298px;height:9px;background:#c1c1c1;"></div>
<svg class="a" style="left:373px;top:1087px" width="5" height="7"><path d="M4.5 0V7L0 3.5Z" fill="#a3a3a3"/></svg>
<svg class="a" style="left:842px;top:1087px" width="5" height="7"><path d="M0 0V7L4.5 3.5Z" fill="#505050"/></svg>
<div class="a" style="left:367px;top:148px;width:494px;height:1px;background:#dcdcdc;"></div>
<div class="a" style="left:861px;top:148px;width:575px;height:950px;background:#fff;"></div>
<div class="a" style="left:861px;top:148px;width:575px;height:22px;background:#f3f3f3;border-bottom:1px solid #cfcfcf;border-top:1px solid #e3e3e3"></div>
<svg class="a" style="left:868px;top:152px" width="13" height="13" viewBox="0 0 13 13"><path d="M5 11H1.5V1.5H11V5" stroke="#6e6e6e" stroke-width="1.2" fill="none"/><path d="M6 6L12 8.2L9.5 9.2L11.8 11.5L11 12.3L8.7 10L7.8 12.3Z" fill="#6e6e6e"/></svg>
<svg class="a" style="left:888px;top:152px" width="13" height="13" viewBox="0 0 13 13"><rect x="3.5" y="0.8" width="8.5" height="11.5" rx="1" stroke="#6e6e6e" stroke-width="1.2" fill="none"/><rect x="0.8" y="5.5" width="4.5" height="6.8" rx="0.6" stroke="#6e6e6e" stroke-width="1.2" fill="#f3f3f3"/></svg>
<div class="a" style="left:910px;top:152px;width:1px;height:14px;background:#d0d0d0;"></div>
<div class="a" style="left:915px;top:168px;width:58px;height:2px;background:#2b8ef0;"></div>
<div class="a nw" style="top:153.19px;font-size:11px;line-height:11px;color:#333;font-family:'Liberation Sans',sans-serif;left:924px;transform:scaleX(0.85);transform-origin:0 0;">Elements</div>
<div class="a nw" style="top:153.19px;font-size:11px;line-height:11px;color:#5a5a5a;font-family:'Liberation Sans',sans-serif;left:981px;transform:scaleX(0.85);transform-origin:0 0;">Console</div>
<div class="a nw" style="top:153.19px;font-size:11px;line-height:11px;color:#5a5a5a;font-family:'Liberation Sans',sans-serif;left:1035px;transform:scaleX(0.85);transform-origin:0 0;">Sources</div>
<div class="a nw" style="top:153.19px;font-size:11px;line-height:11px;color:#5a5a5a;font-family:'Liberation Sans',sans-serif;left:1088px;transform:scaleX(0.85);transform-origin:0 0;">Network</div>
<div class="a nw" style="top:153.19px;font-size:11px;line-height:11px;color:#5a5a5a;font-family:'Liberation Sans',sans-serif;left:1141.5px;transform:scaleX(0.85);transform-origin:0 0;">Performance</div>
<div class="a nw" style="top:153.19px;font-size:11px;line-height:11px;color:#5a5a5a;font-family:'Liberation Sans',sans-serif;left:1213px;transform:scaleX(0.85);transform-origin:0 0;">Memory</div>
<div class="a nw" style="top:153.19px;font-size:11px;line-height:11px;color:#5a5a5a;font-family:'Liberation Sans',sans-serif;left:1265px;transform:scaleX(0.85);transform-origin:0 0;">Application</div>
<div class="a nw" style="top:150.15px;font-size:14px;line-height:14px;color:#5a5a5a;font-family:'Liberation Sans',sans-serif;left:1327px;transform:scaleX(0.9)">»</div>
<div class="a" style="left:1385px;top:152px;width:1px;height:14px;background:#d0d0d0;"></div>
<svg class="a" style="left:1397px;top:153px" width="4" height="12"><circle cx="2" cy="1.8" r="1.3" fill="#5a5a5a"/><circle cx="2" cy="6" r="1.3" fill="#5a5a5a"/><circle cx="2" cy="10.2" r="1.3" fill="#5a5a5a"/></svg>
<svg class="a" style="left:1416px;top:154px" width="10" height="10"><path d="M1 1L9 9M9 1L1 9" stroke="#5a5a5a" stroke-width="1.5"/></svg>
<div class="a" style="left:861px;top:170px;width:284px;height:611px;background:#fff;"></div>
<div class="a" style="left:862px;top:221px;width:283px;height:23px;background:#e2e2e2;"></div>
<div class="a nw" style="top:174.25px;font-size:8.55px;line-height:8.55px;color:#222;font-family:'Liberation Mono',monospace;left:872.2px;"><span style="color:#c0c0c0">&lt;!doctype html&gt;</span></div>
<div class="a nw" style="top:186.85px;font-size:8.55px;line-height:8.55px;color:#222;font-family:'Liberation Mono',monospace;left:872.2px;"><span style="color:#a894a6">&lt;</span><span style="color:#881280">html</span> <span style="color:#994500">xmlns</span><span style="color:#a894a6">="</span><span style="color:#1a1aa6">http://www.w3.org/1999/xhtml</span><span style="color:#a894a6">"</span> <span style="color:#994500">lang</span><span style="color:#a894a6">="</span><span style="color:#1a1aa6">en</span><span style="color:#a894a6">"</span></div>
<div class="a nw" style="top:198.65px;font-size:8.55px;line-height:8.55px;color:#222;font-family:'Liberation Mono',monospace;left:863.6px;"><span style="color:#994500">xml:lang</span><span style="color:#a894a6">&gt;</span></div>
<svg class="a" style="left:875px;top:210px" width="5" height="7"><path d="M0 0V7L4.5 3.5Z" fill="#6e6e6e"/></svg>
<div class="a nw" style="top:210.85px;font-size:8.55px;line-height:8.55px;color:#222;font-family:'Liberation Mono',monospace;left:881.3px;"><span style="color:#a894a6">&lt;</span><span style="color:#881280">head</span><span style="color:#a894a6">&gt;</span><span style="color:#881280">…</span><span style="color:#a894a6">&lt;/</span><span style="color:#881280">head</span><span style="color:#a894a6">&gt;</span></div>
<div class="a nw" style="top:221.38px;font-size:9px;line-height:9px;color:#333;font-family:'Liberation Sans',sans-serif;font-weight:bold;letter-spacing:-0.5px;left:862px;">...</div>
<svg class="a" style="left:875px;top:222.5px" width="5" height="7"><path d="M0 0V7L4.5 3.5Z" fill="#6e6e6e"/></svg>
<div class="a nw" style="top:223.45px;font-size:8.55px;line-height:8.55px;color:#222;font-family:'Liberation Mono',monospace;left:881.3px;"><span style="color:#a894a6">&lt;</span><span style="color:#881280">body</span> <span style="color:#994500">style</span><span style="color:#a894a6">="</span><span style="color:#1a1aa6">display: block;</span><span style="color:#a894a6">"</span> <span style="color:#994500">data-qtijs-view</span><span style="color:#a894a6">=</span></div>
<div class="a nw" style="top:235.25px;font-size:8.55px;line-height:8.55px;color:#222;font-family:'Liberation Mono',monospace;left:873.7px;"><span style="color:#a894a6">"</span><span style="color:#1a1aa6">candidate scorer</span><span style="color:#a894a6">"</span><span style="color:#a894a6">&gt;</span><span style="color:#881280">…</span><span style="color:#a894a6">&lt;/</span><span style="color:#881280">body</span><span style="color:#a894a6">&gt;</span> <span style="color:#888">== </span><i style="color:#888">$0</i></div>
<svg class="a" style="left:875px;top:247px" width="5" height="7"><path d="M0 0V7L4.5 3.5Z" fill="#6e6e6e"/></svg>
<div class="a nw" style="top:247.95px;font-size:8.55px;line-height:8.55px;color:#222;font-family:'Liberation Mono',monospace;left:881.3px;"><span style="color:#a894a6">&lt;</span><span style="color:#881280">script</span><span style="color:#a894a6">&gt;</span><span style="color:#881280">…</span><span style="color:#a894a6">&lt;/</span><span style="color:#881280">script</span><span style="color:#a894a6">&gt;</span></div>
<div class="a nw" style="top:260.15px;font-size:8.55px;line-height:8.55px;color:#222;font-family:'Liberation Mono',monospace;left:872.2px;"><span style="color:#a894a6">&lt;/</span><span style="color:#881280">html</span><span style="color:#a894a6">&gt;</span></div>
<div class="a" style="left:861px;top:780px;width:284px;height:1px;background:#cfcfcf;"></div>
<div class="a" style="left:890px;top:782px;width:32px;height:17px;background:#e8e8e8;"></div>
<div class="a nw" style="top:784.81px;font-size:10.5px;line-height:10.5px;color:#881280;font-family:'Liberation Sans',sans-serif;left:866.5px;transform:scaleX(0.85);transform-origin:0 0;">html</div>
<div class="a nw" style="top:784.81px;font-size:10.5px;line-height:10.5px;color:#333;font-family:'Liberation Sans',sans-serif;left:895px;transform:scaleX(0.85);transform-origin:0 0;">body</div>
<div class="a" style="left:1145px;top:170px;width:1px;height:630px;background:#cfcfcf;"></div>
<div class="a" style="left:1146px;top:170px;width:289px;height:20px;background:#f3f3f3;border-bottom:1px solid #dcdcdc"></div>
<div class="a" style="left:1146px;top:188px;width:41px;height:2px;background:#2b8ef0;"></div>
<div class="a nw" style="top:173.89px;font-size:11px;line-height:11px;color:#333;font-family:'Liberation Sans',sans-serif;left:1153px;transform:scaleX(0.85);transform-origin:0 0;">Styles</div>
<div class="a nw" style="top:173.89px;font-size:11px;line-height:11px;color:#5a5a5a;font-family:'Liberation Sans',sans-serif;left:1193px;transform:scaleX(0.85);transform-origin:0 0;">Computed</div>
<div class="a nw" style="top:173.89px;font-size:11px;line-height:11px;color:#5a5a5a;font-family:'Liberation Sans',sans-serif;left:1252px;transform:scaleX(0.85);transform-origin:0 0;">Event Listeners</div>
<div class="a nw" style="top:171.15px;font-size:14px;line-height:14px;color:#5a5a5a;font-family:'Liberation Sans',sans-serif;left:1331px;">»</div>
<div class="a" style="left:1146px;top:190px;width:289px;height:22px;background:#f3f3f3;border-bottom:1px solid #e0e0e0"></div>
<div class="a" style="left:1148px;top:193px;width:201px;height:16px;background:#fff;"></div>
<div class="a nw" style="top:195.89px;font-size:11px;line-height:11px;color:#9a9a9a;font-family:'Liberation Sans',sans-serif;left:1151px;transform:scaleX(0.85);transform-origin:0 0;">Filter</div>
<div class="a nw" style="top:198.75px;font-size:8.55px;line-height:8.55px;color:#333;font-family:'Liberation Mono',monospace;font-weight:bold;left:1358px;">:hov</div>
<div class="a nw" style="top:198.75px;font-size:8.55px;line-height:8.55px;color:#333;font-family:'Liberation Mono',monospace;font-weight:bold;left:1386px;">.cls</div>
<svg class="a" style="left:1416px;top:195px" width="10" height="10"><path d="M5 0V10M0 5H10" stroke="#5a5a5a" stroke-width="1.3"/></svg>
<svg class="a" style="left:1426px;top:204px" width="4" height="4"><path d="M4 0V4H0Z" fill="#5a5a5a"/></svg>
<div class="a nw" style="top:214.65px;font-size:8.55px;line-height:8.55px;color:#222;font-family:'Liberation Mono',monospace;left:1149px;"><span style="color:#888">element.style</span> <span style="color:#333">{</span></div>
<div class="a nw" style="top:227.15px;font-size:8.55px;line-height:8.55px;color:#222;font-family:'Liberation Mono',monospace;left:1163px;"><span style="color:#c80000">display</span><span style="color:#222">: block;</span></div>
<div class="a nw" style="top:238.65px;font-size:8.55px;line-height:8.55px;color:#333;font-family:'Liberation Mono',monospace;left:1149px;">}</div>
<div class="a" style="left:1146px;top:249px;width:289px;height:1px;background:#e6e6e6;"></div>
<div class="a nw" style="top:253.75px;font-size:8.55px;line-height:8.55px;color:#222;font-family:'Liberation Mono',monospace;left:1149px;">body {</div>
<div class="a nw" style="top:253.75px;font-size:8.55px;line-height:8.55px;color:#555;font-family:'Liberation Mono',monospace;left:631px;width:800px;text-align:right;text-decoration:underline">style.css:22</div>
<div class="a nw" style="top:266.25px;font-size:8.55px;line-height:8.55px;color:#222;font-family:'Liberation Mono',monospace;left:1163px;"><span style="color:#c80000">background</span><span style="color:#222">: </span><span style="display:inline-block;width:7px;height:7px;background:#666;border:1px solid rgba(0,0,0,0.25);margin:0 2px 0 1px;vertical-align:-0.5px"></span><span style="color:#222">var(--sharedvocab-body-bg);</span></div>
<div class="a nw" style="top:277.85px;font-size:8.55px;line-height:8.55px;color:#333;font-family:'Liberation Mono',monospace;left:1149px;">}</div>
<div class="a" style="left:1146px;top:288px;width:289px;height:1px;background:#e6e6e6;"></div>
<div class="a nw" style="top:292.85px;font-size:8.55px;line-height:8.55px;color:#222;font-family:'Liberation Mono',monospace;left:1149px;"><i>body</i> {</div>
<div class="a nw" style="top:292.85px;font-size:8.55px;line-height:8.55px;color:#333;font-family:'Liberation Mono',monospace;left:631px;width:800px;text-align:right;"><i>user agent stylesheet</i></div>
<div class="a nw" style="top:304.95px;font-size:8.55px;line-height:8.55px;color:#222;font-family:'Liberation Mono',monospace;left:1163px;"><i><s><span style="color:#c80000">display</span><span style="color:#222">: block;</span></s></i></div>
<div class="a nw" style="top:315.95px;font-size:8.55px;line-height:8.55px;color:#222;font-family:'Liberation Mono',monospace;left:1163px;"><i><span style="color:#c80000">margin</span><span style="color:#222">:</span></i></div>
<svg class="a" style="left:1202px;top:316px" width="5" height="7"><path d="M0 0V7L4.5 3.5Z" fill="#222"/></svg>
<div class="a nw" style="top:315.95px;font-size:8.55px;line-height:8.55px;color:#222;font-family:'Liberation Mono',monospace;left:1209px;"><i>8px;</i></div>
<div class="a nw" style="top:327.45px;font-size:8.55px;line-height:8.55px;color:#222;font-family:'Liberation Mono',monospace;left:1149px;"><i>}</i></div>
<div class="a" style="left:1146px;top:339px;width:289px;height:18px;background:#f0f0f0;border-top:1px solid #e0e0e0;border-bottom:1px solid #e0e0e0"></div>
<div class="a nw" style="top:341.89px;font-size:11px;line-height:11px;color:#444;font-family:'Liberation Sans',sans-serif;left:1150px;transform:scaleX(0.85);transform-origin:0 0;">Inherited from</div>
<div class="a" style="left:1210px;top:342px;width:27px;height:13px;background:#fff;border:1px solid #dadada"></div>
<div class="a nw" style="top:345.75px;font-size:8.55px;line-height:8.55px;color:#881280;font-family:'Liberation Mono',monospace;left:1213px;">html</div>
<div class="a nw" style="top:361.65px;font-size:8.55px;line-height:8.55px;color:#222;font-family:'Liberation Mono',monospace;left:1149px;">:root {</div>
<div class="a nw" style="top:361.65px;font-size:8.55px;line-height:8.55px;color:#555;font-family:'Liberation Mono',monospace;left:631px;width:800px;text-align:right;text-decoration:underline">style.css:5</div>
<div class="a nw" style="top:374.15px;font-size:8.55px;line-height:8.55px;color:#222;font-family:'Liberation Mono',monospace;left:1163px;"><span style="color:#d85a5a">--counter-suffix</span><span style="color:#555">: </span><span style="color:#555">" ";</span></div>
<div class="a nw" style="top:385.05px;font-size:8.55px;line-height:8.55px;color:#222;font-family:'Liberation Mono',monospace;left:1163px;"><span style="color:#c80000">--sharedvocab-choice-border</span><span style="color:#222">: </span><span style="display:inline-block;width:7px;height:7px;background:#4682b4;border:1px solid rgba(0,0,0,0.25);margin:0 2px 0 1px;vertical-align:-0.5px"></span><span style="color:#222">steelblue;</span></div>
<div class="a nw" style="top:395.95px;font-size:8.55px;line-height:8.55px;color:#222;font-family:'Liberation Mono',monospace;left:1163px;"><span style="color:#c80000">--sharedvocab-choice-color</span><span style="color:#222">: </span><span style="display:inline-block;width:7px;height:7px;background:#4682b4;border:1px solid rgba(0,0,0,0.25);margin:0 2px 0 1px;vertical-align:-0.5px"></span><span style="color:#222">steelblue;</span></div>
<div class="a nw" style="top:406.85px;font-size:8.55px;line-height:8.55px;color:#222;font-family:'Liberation Mono',monospace;left:1163px;"><span style="color:#d85a5a">--sharedvocab-choice-bg</span><span style="color:#555">: </span><span style="display:inline-block;width:7px;height:7px;background:#f9f9f9;border:1px solid rgba(0,0,0,0.25);margin:0 2px 0 1px;vertical-align:-0.5px"></span><span style="color:#555">#f9f9f9;</span></div>
<div class="a nw" style="top:417.75px;font-size:8.55px;line-height:8.55px;color:#222;font-family:'Liberation Mono',monospace;left:1163px;"><span style="color:#d85a5a">--sharedvocab-selected-choice-color</span><span style="color:#555">: </span><span style="display:inline-block;width:7px;height:7px;background:#fff;border:1px solid rgba(0,0,0,0.25);margin:0 2px 0 1px;vertical-align:-0.5px"></span><span style="color:#555">white;</span></div>
<div class="a nw" style="top:428.65px;font-size:8.55px;line-height:8.55px;color:#222;font-family:'Liberation Mono',monospace;left:1163px;"><span style="color:#c80000">--sharedvocab-selected-choice-bg</span><span style="color:#222">: </span><span style="display:inline-block;width:7px;height:7px;background:#4682b4;border:1px solid rgba(0,0,0,0.25);margin:0 2px 0 1px;vertical-align:-0.5px"></span><span style="color:#222">steelblue;</span></div>
<div class="a nw" style="top:439.55px;font-size:8.55px;line-height:8.55px;color:#222;font-family:'Liberation Mono',monospace;left:1163px;"><span style="color:#d85a5a">--sharedvocab-submitted-color</span><span style="color:#555">: </span><span style="display:inline-block;width:7px;height:7px;background:#4682b4;border:1px solid rgba(0,0,0,0.25);margin:0 2px 0 1px;vertical-align:-0.5px"></span><span style="color:#555">steelblue;</span></div>
<div class="a nw" style="top:450.45px;font-size:8.55px;line-height:8.55px;color:#222;font-family:'Liberation Mono',monospace;left:1163px;"><span style="color:#d85a5a">--sharedvocab-submittable-color</span><span style="color:#555">: </span><span style="display:inline-block;width:7px;height:7px;background:#ffa500;border:1px solid rgba(0,0,0,0.25);margin:0 2px 0 1px;vertical-align:-0.5px"></span><span style="color:#555">orange;</span></div>
<div class="a nw" style="top:461.35px;font-size:8.55px;line-height:8.55px;color:#222;font-family:'Liberation Mono',monospace;left:1163px;"><span style="color:#c80000">--sharedvocab-current-item-color</span><span style="color:#222">: </span><span style="display:inline-block;width:7px;height:7px;background:#555;border:1px solid rgba(0,0,0,0.25);margin:0 2px 0 1px;vertical-align:-0.5px"></span><span style="color:#222">#555;</span></div>
<div class="a nw" style="top:472.25px;font-size:8.55px;line-height:8.55px;color:#222;font-family:'Liberation Mono',monospace;left:1163px;"><span style="color:#d85a5a">--sharedvocab-default-item-color</span><span style="color:#555">: </span><span style="display:inline-block;width:7px;height:7px;background:#999;border:1px solid rgba(0,0,0,0.25);margin:0 2px 0 1px;vertical-align:-0.5px"></span><span style="color:#555">#999;</span></div>
<div class="a nw" style="top:483.15px;font-size:8.55px;line-height:8.55px;color:#222;font-family:'Liberation Mono',monospace;left:1163px;"><span style="color:#d85a5a">--sharedvocab-section-divider-color</span><span style="color:#555">: </span><span style="display:inline-block;width:7px;height:7px;background:#999;border:1px solid rgba(0,0,0,0.25);margin:0 2px 0 1px;vertical-align:-0.5px"></span><span style="color:#555">#999;</span></div>
<div class="a nw" style="top:494.05px;font-size:8.55px;line-height:8.55px;color:#222;font-family:'Liberation Mono',monospace;left:1163px;"><span style="color:#c80000">--sharedvocab-body-bg</span><span style="color:#222">: </span><span style="display:inline-block;width:7px;height:7px;background:#666;border:1px solid rgba(0,0,0,0.25);margin:0 2px 0 1px;vertical-align:-0.5px"></span><span style="color:#222">#666;</span></div>
<div class="a nw" style="top:504.95px;font-size:8.55px;line-height:8.55px;color:#222;font-family:'Liberation Mono',monospace;left:1163px;"><span style="color:#d85a5a">--sharedvocab-gap-bg</span><span style="color:#555">: </span><span style="display:inline-block;width:7px;height:7px;background:#e1e9f7;border:1px solid rgba(0,0,0,0.25);margin:0 2px 0 1px;vertical-align:-0.5px"></span><span style="color:#555">#e1e9f7;</span></div>
<div class="a nw" style="top:515.85px;font-size:8.55px;line-height:8.55px;color:#222;font-family:'Liberation Mono',monospace;left:1163px;"><span style="color:#d85a5a">--sharedvocab-gapfill-color</span><span style="color:#555">: </span><span style="display:inline-block;width:7px;height:7px;background:#35507a;border:1px solid rgba(0,0,0,0.25);margin:0 2px 0 1px;vertical-align:-0.5px"></span><span style="color:#555">#35507a;</span></div>
<div class="a nw" style="top:526.75px;font-size:8.55px;line-height:8.55px;color:#222;font-family:'Liberation Mono',monospace;left:1163px;"><span style="color:#c80000">--sharedvocab-text-input-color</span><span style="color:#222">: </span><span style="display:inline-block;width:7px;height:7px;background:#35507a;border:1px solid rgba(0,0,0,0.25);margin:0 2px 0 1px;vertical-align:-0.5px"></span><span style="color:#222">#35507a;</span></div>
<div class="a nw" style="top:537.65px;font-size:8.55px;line-height:8.55px;color:#333;font-family:'Liberation Mono',monospace;left:1149px;">}</div>
<div class="a" style="left:1146px;top:549px;width:289px;height:1px;background:#e6e6e6;"></div>
<div class="a" style="left:1229px;top:576px;width:121px;height:99px;background:#f9cc9d;border:1px dotted #333"></div>
<div class="a" style="left:1238px;top:589px;width:103px;height:72px;background:#fddd9b;border:1px solid #4a4a4a;border-radius:1px"></div>
<div class="a" style="left:1248px;top:603px;width:83px;height:44px;background:#c3d08b;border:1px dotted #808080"></div>
<div class="a" style="left:1259px;top:617px;width:62px;height:16px;background:#8cb6c0;border:1px solid #808080"></div>
<div class="a nw" style="top:578.16px;font-size:9.5px;line-height:9.5px;color:#333;font-family:'Liberation Sans',sans-serif;left:1235px;transform:scaleX(0.9);transform-origin:0 0;">margin</div>
<div class="a nw" style="top:578.16px;font-size:9.5px;line-height:9.5px;color:#333;font-family:'Liberation Sans',sans-serif;left:889.5px;width:800px;text-align:center;transform:scaleX(0.9);transform-origin:50% 0;">8</div>
<div class="a nw" style="top:591.16px;font-size:9.5px;line-height:9.5px;color:#333;font-family:'Liberation Sans',sans-serif;left:1245px;transform:scaleX(0.9);transform-origin:0 0;">border</div>
<div class="a nw" style="top:591.16px;font-size:9.5px;line-height:9.5px;color:#333;font-family:'Liberation Sans',sans-serif;left:889.5px;width:800px;text-align:center;transform:scaleX(0.9);transform-origin:50% 0;">–</div>
<div class="a nw" style="top:605.16px;font-size:9.5px;line-height:9.5px;color:#333;font-family:'Liberation Sans',sans-serif;left:1255px;transform:scaleX(0.9);transform-origin:0 0;">padding</div>
<div class="a nw" style="top:605.16px;font-size:9.5px;line-height:9.5px;color:#333;font-family:'Liberation Sans',sans-serif;left:889.5px;width:800px;text-align:center;transform:scaleX(0.9);transform-origin:50% 0;">–</div>
<div class="a nw" style="top:619.66px;font-size:9.5px;line-height:9.5px;color:#333;font-family:'Liberation Sans',sans-serif;left:890px;width:800px;text-align:center;transform:scaleX(0.9);transform-origin:50% 0;">598 × 44729</div>
<div class="a nw" style="top:619.66px;font-size:9.5px;line-height:9.5px;color:#333;font-family:'Liberation Sans',sans-serif;left:833.5px;width:800px;text-align:center;transform:scaleX(0.9);transform-origin:50% 0;">8</div>
<div class="a nw" style="top:619.66px;font-size:9.5px;line-height:9.5px;color:#333;font-family:'Liberation Sans',sans-serif;left:844px;width:800px;text-align:center;transform:scaleX(0.9);transform-origin:50% 0;">–</div>
<div class="a nw" style="top:619.66px;font-size:9.5px;line-height:9.5px;color:#333;font-family:'Liberation Sans',sans-serif;left:854px;width:800px;text-align:center;transform:scaleX(0.9);transform-origin:50% 0;">–</div>
<div class="a nw" style="top:619.66px;font-size:9.5px;line-height:9.5px;color:#333;font-family:'Liberation Sans',sans-serif;left:925px;width:800px;text-align:center;transform:scaleX(0.9);transform-origin:50% 0;">–</div>
<div class="a nw" style="top:619.66px;font-size:9.5px;line-height:9.5px;color:#333;font-family:'Liberation Sans',sans-serif;left:935px;width:800px;text-align:center;transform:scaleX(0.9);transform-origin:50% 0;">–</div>
<div class="a nw" style="top:619.66px;font-size:9.5px;line-height:9.5px;color:#333;font-family:'Liberation Sans',sans-serif;left:945px;width:800px;text-align:center;transform:scaleX(0.9);transform-origin:50% 0;">8</div>
<div class="a nw" style="top:634.66px;font-size:9.5px;line-height:9.5px;color:#333;font-family:'Liberation Sans',sans-serif;left:889.5px;width:800px;text-align:center;transform:scaleX(0.9);transform-origin:50% 0;">–</div>
<div class="a nw" style="top:648.66px;font-size:9.5px;line-height:9.5px;color:#333;font-family:'Liberation Sans',sans-serif;left:889.5px;width:800px;text-align:center;transform:scaleX(0.9);transform-origin:50% 0;">–</div>
<div class="a nw" style="top:662.66px;font-size:9.5px;line-height:9.5px;color:#333;font-family:'Liberation Sans',sans-serif;left:889.5px;width:800px;text-align:center;transform:scaleX(0.9);transform-origin:50% 0;">8</div>
<div class="a" style="left:861px;top:799px;width:575px;height:22px;background:#f3f3f3;border-top:1px solid #cfcfcf;border-bottom:1px solid #cfcfcf"></div>
<svg class="a" style="left:872px;top:804px" width="4" height="12"><circle cx="2" cy="1.8" r="1.2" fill="#5a5a5a"/><circle cx="2" cy="6" r="1.2" fill="#5a5a5a"/><circle cx="2" cy="10.2" r="1.2" fill="#5a5a5a"/></svg>
<div class="a" style="left:883px;top:818px;width:50px;height:2px;background:#2b8ef0;"></div>
<div class="a nw" style="top:803.89px;font-size:11px;line-height:11px;color:#333;font-family:'Liberation Sans',sans-serif;left:891px;transform:scaleX(0.85);transform-origin:0 0;">Console</div>
<div class="a nw" style="top:803.89px;font-size:11px;line-height:11px;color:#5a5a5a;font-family:'Liberation Sans',sans-serif;left:940px;transform:scaleX(0.85);transform-origin:0 0;">Animations</div>
<div class="a nw" style="top:803.89px;font-size:11px;line-height:11px;color:#5a5a5a;font-family:'Liberation Sans',sans-serif;left:1009.5px;transform:scaleX(0.85);transform-origin:0 0;">Network conditions</div>
<div class="a nw" style="top:803.89px;font-size:11px;line-height:11px;color:#5a5a5a;font-family:'Liberation Sans',sans-serif;left:1111px;transform:scaleX(0.85);transform-origin:0 0;">Rendering</div>
<div class="a nw" style="top:803.89px;font-size:11px;line-height:11px;color:#5a5a5a;font-family:'Liberation Sans',sans-serif;left:1177px;transform:scaleX(0.85);transform-origin:0 0;">Sensors</div>
<div class="a nw" style="top:803.89px;font-size:11px;line-height:11px;color:#5a5a5a;font-family:'Liberation Sans',sans-serif;left:1233px;transform:scaleX(0.85);transform-origin:0 0;">What's New</div>
<div class="a nw" style="top:803.89px;font-size:11px;line-height:11px;color:#5a5a5a;font-family:'Liberation Sans',sans-serif;left:1306px;transform:scaleX(0.85);transform-origin:0 0;">Changes</div>
<svg class="a" style="left:1416px;top:805px" width="10" height="10"><path d="M1 1L9 9M9 1L1 9" stroke="#5a5a5a" stroke-width="1.5"/></svg>
<div class="a" style="left:861px;top:821px;width:575px;height:21px;background:#f3f3f3;border-bottom:1px solid #cfcfcf"></div>
<svg class="a" style="left:867px;top:825px" width="13" height="12" viewBox="0 0 13 12"><rect x="0.6" y="0.6" width="11.8" height="10.8" stroke="#6e6e6e" stroke-width="1.2" fill="none"/><path d="M3.5 1V11" stroke="#6e6e6e" stroke-width="1.2"/><path d="M6 3.5V8.5L9 6Z" fill="#6e6e6e"/></svg>
<svg class="a" style="left:890px;top:825px" width="12" height="12" viewBox="0 0 12 12"><circle cx="6" cy="6" r="4.8" stroke="#6e6e6e" stroke-width="1.5" fill="none"/><path d="M2.8 2.8L9.2 9.2" stroke="#6e6e6e" stroke-width="1.5"/></svg>
<div class="a" style="left:910px;top:824px;width:1px;height:14px;background:#d0d0d0;"></div>
<div class="a nw" style="top:825.89px;font-size:11px;line-height:11px;color:#333;font-family:'Liberation Sans',sans-serif;left:917px;transform:scaleX(0.85);transform-origin:0 0;">top</div>
<svg class="a" style="left:1011px;top:829px" width="7" height="5"><path d="M0 0H7L3.5 4.5Z" fill="#333"/></svg>
<div class="a" style="left:1025px;top:824px;width:1px;height:14px;background:#d0d0d0;"></div>
<svg class="a" style="left:1033px;top:826px" width="13" height="10" viewBox="0 0 13 10"><path d="M0.5 5Q6.5 -2.5 12.5 5Q6.5 12.5 0.5 5Z" fill="#6e6e6e"/><circle cx="6.5" cy="5" r="2.4" fill="#f3f3f3"/><circle cx="6.5" cy="5" r="1.3" fill="#6e6e6e"/></svg>
<div class="a" style="left:1053px;top:824px;width:1px;height:14px;background:#d0d0d0;"></div>
<div class="a" style="left:1059px;top:824px;width:128px;height:15px;background:#fff;"></div>
<div class="a nw" style="top:825.89px;font-size:11px;line-height:11px;color:#9a9a9a;font-family:'Liberation Sans',sans-serif;left:1063px;transform:scaleX(0.85);transform-origin:0 0;">Filter</div>
<div class="a nw" style="top:825.89px;font-size:11px;line-height:11px;color:#333;font-family:'Liberation Sans',sans-serif;left:1193px;transform:scaleX(0.85);transform-origin:0 0;">Default levels</div>
<svg class="a" style="left:1252px;top:829px" width="7" height="5"><path d="M0 0H7L3.5 4.5Z" fill="#333"/></svg>
<div class="a" style="left:1406px;top:824px;width:1px;height:14px;background:#d0d0d0;"></div>
<svg class="a" style="left:1414px;top:824px" width="14" height="14" viewBox="0 0 24 24"><path fill="#1a73e8" d="M19.4 13c.04-.3.1-.65.1-1s-.04-.7-.1-1l2.1-1.65c.2-.15.25-.4.12-.64l-2-3.46c-.12-.22-.4-.3-.6-.22l-2.5 1c-.5-.4-1.1-.7-1.7-.97L14.5 2.4c-.04-.24-.25-.4-.5-.4h-4c-.25 0-.46.17-.5.4l-.37 2.65c-.6.25-1.17.56-1.7.96l-2.5-1c-.2-.1-.48 0-.6.22l-2 3.46c-.13.22-.07.5.12.64L4.6 11c-.05.3-.1.66-.1 1s.04.7.1 1l-2.1 1.65c-.2.15-.25.42-.13.64l2 3.46c.13.22.4.3.6.22l2.5-1c.52.4 1.1.72 1.7.97l.37 2.65c.04.24.25.4.5.4h4c.25 0 .46-.17.5-.4l.37-2.65c.6-.25 1.18-.57 1.7-.97l2.5 1c.22.1.48 0 .6-.22l2-3.46c.12-.22.07-.5-.12-.64L19.4 13zM12 15.5c-1.93 0-3.5-1.57-3.5-3.5s1.57-3.5 3.5-3.5 3.5 1.57 3.5 3.5-1.57 3.5-3.5 3.5z"/></svg>
<div class="a" style="left:861px;top:842px;width:575px;height:81px;background:#f3f3f3;border-bottom:1px solid #cfcfcf"></div>
<div class="a" style="left:867px;top:846.4px;width:10px;height:10px;border:1px solid #9a9a9a;border-radius:2px;background:#fff"></div>
<div class="a nw" style="top:846.29px;font-size:11px;line-height:11px;color:#333;font-family:'Liberation Sans',sans-serif;left:881.5px;transform:scaleX(0.85);transform-origin:0 0;">Hide network</div>
<div class="a" style="left:867px;top:866.67px;width:10px;height:10px;border:1px solid #9a9a9a;border-radius:2px;background:#fff"></div>
<div class="a nw" style="top:866.56px;font-size:11px;line-height:11px;color:#333;font-family:'Liberation Sans',sans-serif;left:881.5px;transform:scaleX(0.85);transform-origin:0 0;">Preserve log</div>
<div class="a" style="left:867px;top:886.9399999999999px;width:10px;height:10px;border:1px solid #9a9a9a;border-radius:2px;background:#fff"></div>
<div class="a nw" style="top:886.83px;font-size:11px;line-height:11px;color:#333;font-family:'Liberation Sans',sans-serif;left:881.5px;transform:scaleX(0.85);transform-origin:0 0;">Selected context only</div>
<div class="a" style="left:867px;top:907.21px;width:10px;height:10px;border:1px solid #9a9a9a;border-radius:2px;background:#fff"></div>
<svg class="a" style="left:868px;top:908.21px" width="8" height="8"><path d="M1 4L3.2 6.5L7 1.2" stroke="#333" stroke-width="1.5" fill="none"/></svg>
<div class="a nw" style="top:907.10px;font-size:11px;line-height:11px;color:#333;font-family:'Liberation Sans',sans-serif;left:881.5px;transform:scaleX(0.85);transform-origin:0 0;">Group similar</div>
<div class="a" style="left:1154px;top:846.4px;width:10px;height:10px;border:1px solid #9a9a9a;border-radius:2px;background:#fff"></div>
<div class="a nw" style="top:846.29px;font-size:11px;line-height:11px;color:#333;font-family:'Liberation Sans',sans-serif;left:1168px;transform:scaleX(0.85);transform-origin:0 0;">Log XMLHttpRequests</div>
<div class="a" style="left:1154px;top:866.67px;width:10px;height:10px;border:1px solid #9a9a9a;border-radius:2px;background:#fff"></div>
<svg class="a" style="left:1155px;top:867.67px" width="8" height="8"><path d="M1 4L3.2 6.5L7 1.2" stroke="#333" stroke-width="1.5" fill="none"/></svg>
<div class="a nw" style="top:866.56px;font-size:11px;line-height:11px;color:#333;font-family:'Liberation Sans',sans-serif;left:1168px;transform:scaleX(0.85);transform-origin:0 0;">Eager evaluation</div>
<div class="a" style="left:1154px;top:886.9399999999999px;width:10px;height:10px;border:1px solid #9a9a9a;border-radius:2px;background:#fff"></div>
<svg class="a" style="left:1155px;top:887.9399999999999px" width="8" height="8"><path d="M1 4L3.2 6.5L7 1.2" stroke="#333" stroke-width="1.5" fill="none"/></svg>
<div class="a nw" style="top:886.83px;font-size:11px;line-height:11px;color:#333;font-family:'Liberation Sans',sans-serif;left:1168px;transform:scaleX(0.85);transform-origin:0 0;">Autocomplete from history</div>
<div class="a nw" style="top:924.45px;font-size:8.55px;line-height:8.55px;color:#333;font-family:'Liberation Mono',monospace;left:880.8px;">loaded <span style="text-decoration:underline;color:#333">http://localhost/sharedvocab/graphic-order.xml</span> 721msecs</div>
<div class="a nw" style="top:924.45px;font-size:8.55px;line-height:8.55px;color:#666;font-family:'Liberation Mono',monospace;left:599px;width:800px;text-align:right;text-decoration:underline">qti.js:5871</div>
<div class="a" style="left:861px;top:935px;width:562px;height:1px;background:#f0f0f0;"></div>
<div class="a nw" style="top:939.28px;font-size:8.55px;line-height:8.55px;color:#333;font-family:'Liberation Mono',monospace;left:880.8px;">loaded <span style="text-decoration:underline;color:#333">http://localhost/sharedvocab/position-object.xml</span> 728msecs</div>
<div class="a nw" style="top:939.28px;font-size:8.55px;line-height:8.55px;color:#666;font-family:'Liberation Mono',monospace;left:599px;width:800px;text-align:right;text-decoration:underline">qti.js:5871</div>
<div class="a" style="left:861px;top:950px;width:562px;height:1px;background:#f0f0f0;"></div>
<div class="a nw" style="top:954.11px;font-size:8.55px;line-height:8.55px;color:#333;font-family:'Liberation Mono',monospace;left:880.8px;">loaded <span style="text-decoration:underline;color:#333">http://localhost/sharedvocab/select-point.xml</span> 732msecs</div>
<div class="a nw" style="top:954.11px;font-size:8.55px;line-height:8.55px;color:#666;font-family:'Liberation Mono',monospace;left:599px;width:800px;text-align:right;text-decoration:underline">qti.js:5871</div>
<div class="a" style="left:861px;top:965px;width:562px;height:1px;background:#f0f0f0;"></div>
<div class="a nw" style="top:968.94px;font-size:8.55px;line-height:8.55px;color:#333;font-family:'Liberation Mono',monospace;left:880.8px;">loaded <span style="text-decoration:underline;color:#333">http://localhost/sharedvocab/slider.xml</span> 736msecs</div>
<div class="a nw" style="top:968.94px;font-size:8.55px;line-height:8.55px;color:#666;font-family:'Liberation Mono',monospace;left:599px;width:800px;text-align:right;text-decoration:underline">qti.js:5871</div>
<div class="a" style="left:861px;top:979px;width:562px;height:1px;background:#f0f0f0;"></div>
<div class="a nw" style="top:983.77px;font-size:8.55px;line-height:8.55px;color:#333;font-family:'Liberation Mono',monospace;left:880.8px;">loaded <span style="text-decoration:underline;color:#333">http://localhost/sharedvocab/upload.xml</span> 739msecs</div>
<div class="a nw" style="top:983.77px;font-size:8.55px;line-height:8.55px;color:#666;font-family:'Liberation Mono',monospace;left:599px;width:800px;text-align:right;text-decoration:underline">qti.js:5871</div>
<div class="a" style="left:861px;top:994px;width:562px;height:1px;background:#f0f0f0;"></div>
<div class="a nw" style="top:998.60px;font-size:8.55px;line-height:8.55px;color:#333;font-family:'Liberation Mono',monospace;left:880.8px;">loaded <span style="text-decoration:underline;color:#333">http://localhost/sharedvocab/custom-template.xml</span> 744msecs</div>
<div class="a nw" style="top:998.60px;font-size:8.55px;line-height:8.55px;color:#666;font-family:'Liberation Mono',monospace;left:599px;width:800px;text-align:right;text-decoration:underline">qti.js:5871</div>
<div class="a" style="left:861px;top:1009px;width:562px;height:1px;background:#f0f0f0;"></div>
<div class="a nw" style="top:1013.43px;font-size:8.55px;line-height:8.55px;color:#333;font-family:'Liberation Mono',monospace;left:880.8px;">loaded <span style="text-decoration:underline;color:#333">http://localhost/sharedvocab/companion-materials-rule.xml</span> 748msecs</div>
<div class="a nw" style="top:1013.43px;font-size:8.55px;line-height:8.55px;color:#666;font-family:'Liberation Mono',monospace;left:599px;width:800px;text-align:right;text-decoration:underline">qti.js:5871</div>
<div class="a" style="left:861px;top:1024px;width:562px;height:1px;background:#f0f0f0;"></div>
<div class="a nw" style="top:1028.26px;font-size:8.55px;line-height:8.55px;color:#333;font-family:'Liberation Mono',monospace;left:880.8px;">start 1811msecs</div>
<div class="a nw" style="top:1028.26px;font-size:8.55px;line-height:8.55px;color:#666;font-family:'Liberation Mono',monospace;left:599px;width:800px;text-align:right;text-decoration:underline">qti.js:6105</div>
<div class="a" style="left:861px;top:1039px;width:562px;height:1px;background:#f0f0f0;"></div>
<div class="a nw" style="top:1043.09px;font-size:8.55px;line-height:8.55px;color:#333;font-family:'Liberation Mono',monospace;left:880.8px;">sharedvocab/qti.local.js setup completed</div>
<div class="a nw" style="top:1043.09px;font-size:8.55px;line-height:8.55px;color:#666;font-family:'Liberation Mono',monospace;left:599px;width:800px;text-align:right;text-decoration:underline">qti.local.js:225</div>
<div class="a" style="left:861px;top:1054px;width:562px;height:1px;background:#f0f0f0;"></div>
<div class="a nw" style="top:1057.92px;font-size:8.55px;line-height:8.55px;color:#333;font-family:'Liberation Mono',monospace;left:880.8px;">end start 1840msecs</div>
<div class="a nw" style="top:1057.92px;font-size:8.55px;line-height:8.55px;color:#666;font-family:'Liberation Mono',monospace;left:599px;width:800px;text-align:right;text-decoration:underline">qti.js:6114</div>
<div class="a" style="left:861px;top:1068px;width:562px;height:1px;background:#f0f0f0;"></div>
<svg class="a" style="left:867px;top:1071px" width="6" height="8"><path d="M1 1L4.5 4L1 7" stroke="#1a73e8" stroke-width="1.4" fill="none"/></svg>
<div class="a" style="left:1423px;top:922px;width:12px;height:176px;background:#f7f7f7;border-left:1px solid #ececec"></div>
<svg class="a" style="left:1425px;top:927px" width="7" height="5"><path d="M0 4.5H7L3.5 0Z" fill="#505050"/></svg>
<svg class="a" style="left:1425px;top:1088px" width="7" height="5"><path d="M0 0H7L3.5 4.5Z" fill="#a3a3a3"/></svg>
<div class="a" style="left:1425px;top:1061px;width:8px;height:23px;background:#c1c1c1;"></div>
<div class="a" style="left:1434px;top:148px;width:2px;height:950px;background:#e6e9ee;"></div>
<div class="a" style="left:1436px;top:62px;width:1px;height:1037px;background:#3a3d40;"></div>
</body></html>
